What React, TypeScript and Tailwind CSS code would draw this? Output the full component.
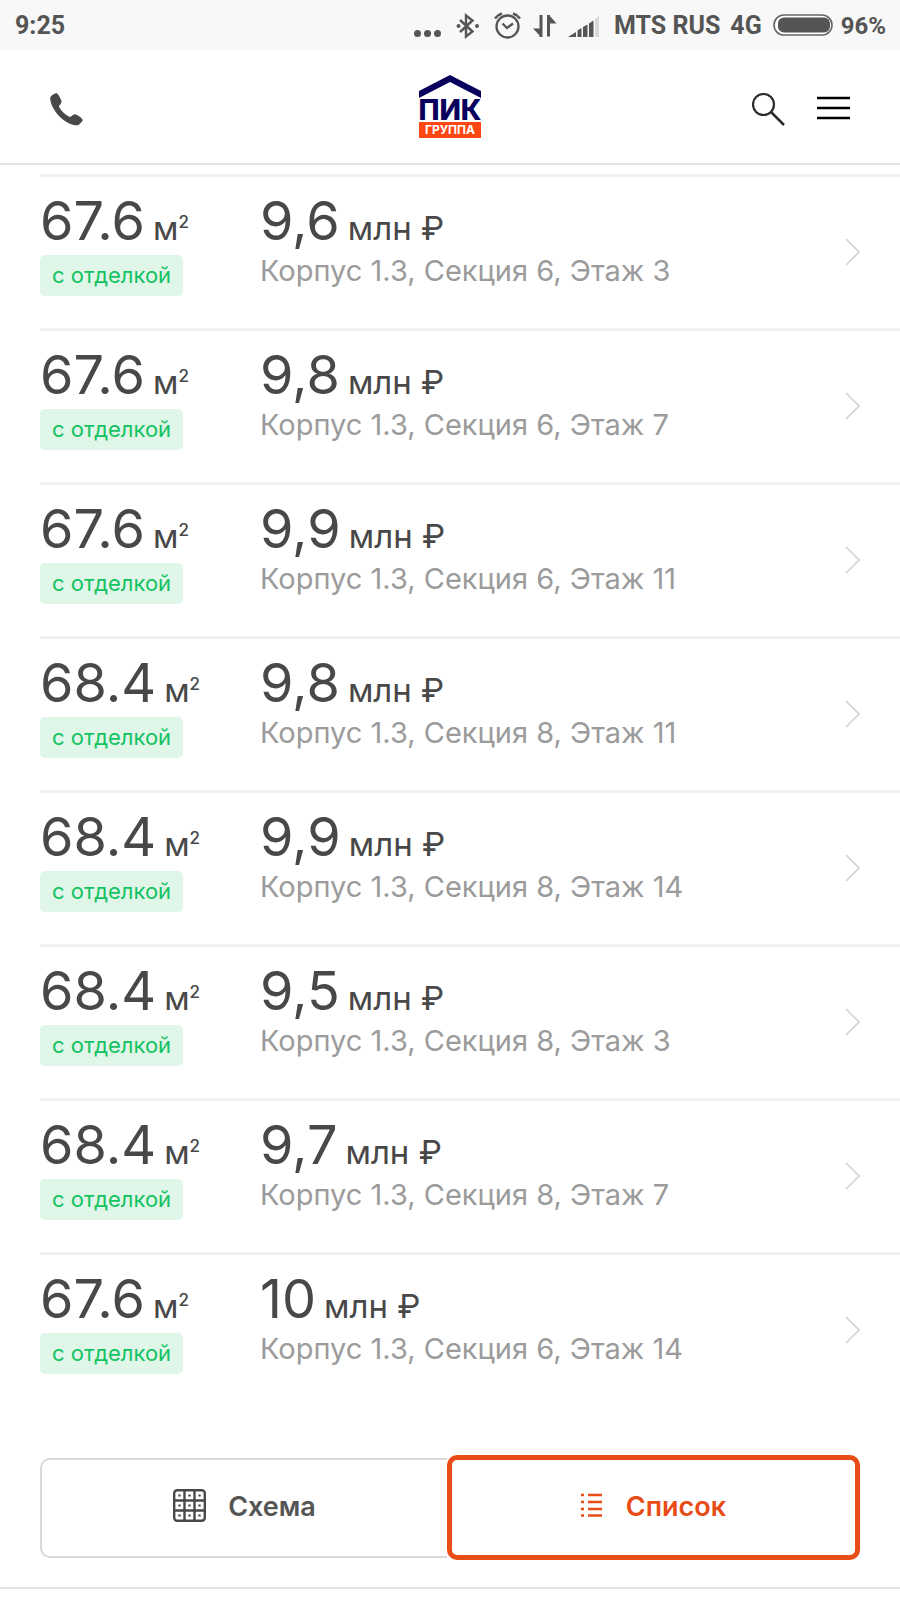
interface Flat {
  id: number;
  area: string;
  price: string;
  section: number;
  floor: number;
}

const flats: Flat[] = [
  { id: 1, area: "67.6", price: "9,6", section: 6, floor: 3 },
  { id: 2, area: "67.6", price: "9,8", section: 6, floor: 7 },
  { id: 3, area: "67.6", price: "9,9", section: 6, floor: 11 },
  { id: 4, area: "68.4", price: "9,8", section: 8, floor: 11 },
  { id: 5, area: "68.4", price: "9,9", section: 8, floor: 14 },
  { id: 6, area: "68.4", price: "9,5", section: 8, floor: 3 },
  { id: 7, area: "68.4", price: "9,7", section: 8, floor: 7 },
  { id: 8, area: "67.6", price: "10", section: 6, floor: 14 },
];

function StatusIcons() {
  return (
    <svg width="190" height="30" viewBox="0 0 190 30" fill="none" stroke="#555" aria-hidden="true">
      {/* dots */}
      <g fill="#555" stroke="none">
        <circle cx="7.5" cy="22.5" r="3.5" />
        <circle cx="17.5" cy="22.5" r="3.5" />
        <circle cx="27.5" cy="22.5" r="3.5" />
      </g>
      {/* bluetooth */}
      <path d="M50 9L62.500 20.500L56 25.500V4.500L62.500 9.500L50 21" strokeWidth="2.4" />
      <circle cx="48.500" cy="15" r="2" fill="#555" stroke="none" />
      <circle cx="67" cy="15" r="2" fill="#555" stroke="none" />
      {/* alarm */}
      <circle cx="97.500" cy="15.500" r="11" strokeWidth="2.300" />
      <path d="M92.500 12.500L97 17L103 12.500" strokeWidth="2.300" />
      <path d="M85 7.500Q87.500 4 92 2.500M110 7.500Q107.500 4 103 2.500" strokeWidth="2.500" />
      {/* data transfer */}
      <path d="M131 4V26M138.500 4V25.500" strokeWidth="3" />
      <path d="M123 17.500H131V26ZM139 4V12.500H146.500Z" fill="#555" stroke="none" />
      {/* signal */}
      <g fill="#555" stroke="none">
        <path d="M158 26L166 21V26Z" />
        <path d="M167.500 19.500L171.500 17V26H167.500Z" />
        <path d="M173 16L177.500 13.500V26H173Z" />
        <path d="M179 12.500L183.500 9.500V26H179Z" />
        <path d="M185 8L189 5V26H185Z" fill="#d9d9d9" />
      </g>
    </svg>
  );
}

function StatusBar() {
  return (
    <div className="flex h-[50px] items-center justify-between bg-[#f8f8f8] pt-0.5 pr-3.5 pl-[15px] font-['Roboto',sans-serif] text-[25px] leading-[30px] font-bold text-[#555]">
      <span>9:25</span>
      <div className="flex items-center">
        <StatusIcons />
        <span className="ml-[14px]">MTS RUS</span>
        <span className="ml-[10px]">4G</span>
        <svg width="60" height="24" viewBox="0 0 60 24" className="ml-[11px]" aria-hidden="true">
          <rect x="1" y="1" width="58" height="20" rx="10" fill="#fff" stroke="#666" strokeWidth="1.600" />
          <rect x="5" y="3.500" width="52" height="15" rx="6" fill="#555" />
        </svg>
        <span className="ml-2 text-2xl">96%</span>
      </div>
    </div>
  );
}

function Logo() {
  return (
    <a href="#" aria-label="ПИК Группа">
      <svg width="62" height="64" viewBox="0 0 62 64" className="font-['Inter',sans-serif]">
        <path d="M0 16L31 0L62 16V23L31 7L0 23Z" fill="#08005c" />
        <text x="31" y="45" textAnchor="middle" className="text-[28px] font-extrabold" fill="#08005c">
          ПИК
        </text>
        <rect y="47" width="62" height="16" fill="#ff4713" />
        <text x="31" y="59" textAnchor="middle" className="text-[12px] font-bold" fill="#fff">
          ГРУППА
        </text>
      </svg>
    </a>
  );
}

function Header() {
  return (
    <header className="grid h-[115px] grid-cols-[1fr_auto_1fr] items-center border-b-2 border-[#dfe3e7] px-[50px]">
      <button aria-label="Позвонить" className="justify-self-start pt-1.5">
        <svg width="33" height="33" viewBox="0 0 33 33" fill="#484848">
          <path d="M5.500 0.300C3.800 0.900 1.500 2.600 0.300 4.200C-0.300 9.500 3.500 17.500 9.500 23.500C15.500 29.300 21.500 32.500 28 32.300C30 31 31.600 29.300 32.800 27.200C32.400 25.500 29.500 23 25.500 21.200C23.800 21.200 21.800 22.300 20.300 24C15.500 22.300 10.500 17.500 8.800 13C10.500 11.500 11.500 10 11.600 8.200C10.500 5 8.300 1.300 7 0.300Z" />
        </svg>
      </button>
      <Logo />
      <div className="flex items-center gap-8 justify-self-end pt-1.5">
        <button aria-label="Поиск">
          <svg width="33" height="33" viewBox="0 0 33 33" fill="none" stroke="#2b2b2b" strokeWidth="2.200">
            <circle cx="11.500" cy="11.500" r="10.500" />
            <path d="M19 19L32 32" strokeWidth="2.500" />
          </svg>
        </button>
        <button aria-label="Меню">
          <svg width="33" height="27" viewBox="0 0 33 27" stroke="#000" strokeWidth="2.400">
            <path d="M0 2H33M0 12H33M0 22H33" />
          </svg>
        </button>
      </div>
    </header>
  );
}

function FlatRow({ flat }: { flat: Flat }) {
  return (
    <li className="border-t-3 border-[#f0f0f0]">
      <a href="#" className="flex h-[151px] items-start pr-10 text-[#484848]">
        <div className="w-[220px] pt-3">
          <p className="flex items-baseline gap-2 pb-0.5 text-[54px] leading-16">
            {flat.area}
            <span className="text-[33px] leading-none">
              м<span className="align-[12px] text-[17px] leading-none font-medium">2</span>
            </span>
          </p>
          <p className="w-fit rounded-[5px] bg-[#dff6e9] px-3 text-[22px] leading-[41px] text-[#13c261]">
            с отделкой
          </p>
        </div>
        <div className="flex-1 pt-3">
          <p className="flex items-baseline gap-2 pb-0.5 text-[54px] leading-16">
            {flat.price}
            <span className="text-[33px] leading-none">млн ₽</span>
          </p>
          <p className="text-[29px] leading-8 text-[#9b9b9b]">
            Корпус 1.3, Секция {flat.section}, Этаж {flat.floor}
          </p>
        </div>
        <svg width="15" height="30" viewBox="0 0 15 30" fill="none" stroke="#cfd3d6" strokeWidth="1.600" className="self-center" aria-hidden="true">
          <path d="M1 1L14 14L1 27" />
        </svg>
      </a>
    </li>
  );
}

function ViewSwitch() {
  return (
    <div className="grid grid-cols-[407fr_413fr] items-center border-b-2 border-[#dfe3e7] px-10 pb-[27px] text-[27px] leading-8 font-semibold">
      <button className="flex h-[100px] items-center justify-center gap-[22px] rounded-l-[10px] border-2 border-r-0 border-[#d9d9d9] pb-0.5 text-[#555]">
        <svg width="33" height="36" viewBox="0 0 33 36" fill="none" stroke="#484848" strokeWidth="2.400" aria-hidden="true">
          <rect x="1.200" y="1.200" width="30.600" height="30.600" rx="3" />
          <path d="M11.500 1V32M21.500 1V32M1 11.500H32M1 21.500H32" />
          <path d="M6.500 5.500V7.500M16.500 5.500V7.500M26.500 5.500V7.500M6.500 15.500V17.500M16.500 15.500V17.500M26.500 15.500V17.500M6.500 25.500V27.500M16.500 25.500V27.500M26.500 25.500V27.500" />
        </svg>
        Схема
      </button>
      <button className="flex h-[105px] items-center justify-center gap-6 rounded-[10px] border-5 border-[#e84c17] pb-0.5 text-[#e84c17]">
        <svg width="21" height="28" viewBox="0 0 21 28" stroke="#e84c17" strokeWidth="2.400" aria-hidden="true">
          <path d="M0 2H3M7 2H21M0 9H3M7 9H21M0 16H3M7 16H21M0 22.500H3M7 22.500H21" />
        </svg>
        Список
      </button>
    </div>
  );
}

export default function App() {
  return (
    <div className="min-h-screen bg-white font-['Inter',sans-serif]">
      <StatusBar />
      <Header />
      <ul className="pt-[9px] pb-[49px] pl-10">
        {flats.map((flat) => (
          <FlatRow key={flat.id} flat={flat} />
        ))}
      </ul>
      <ViewSwitch />
    </div>
  );
}
